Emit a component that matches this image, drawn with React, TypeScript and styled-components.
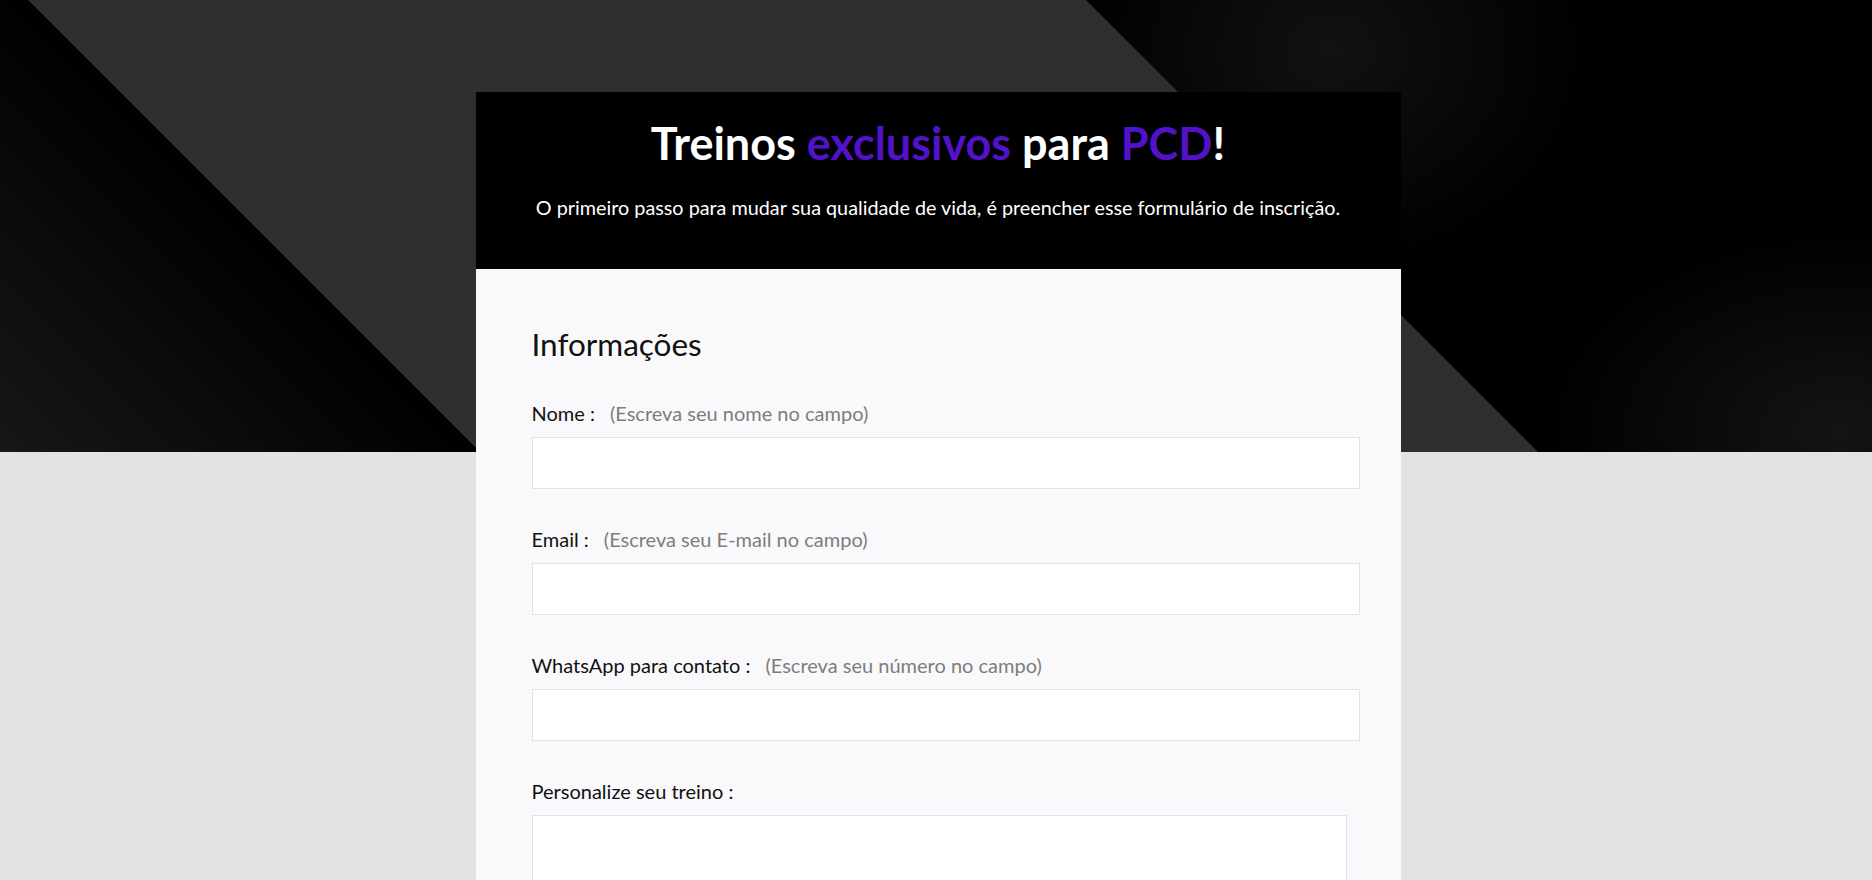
import React from 'react'
import styled, { createGlobalStyle } from 'styled-components'

const GlobalStyle = createGlobalStyle`
  html, body {
    margin: 0;
    padding: 0;
  }

  body {
    font-family: Lato, 'Open Sans', sans-serif;
    background: #e3e3e3;
  }
`

const Page = styled.div`
  min-height: 880px;
  display: grid;
  justify-content: center;
  align-content: start;
  padding-left: 4px;
  background:
    linear-gradient(
        45deg,
        #171717 0px,
        #000 339px,
        #2f2f2f 340px,
        #2f2f2f 1087px,
        transparent 1088px
      )
      top left / 100% 452px no-repeat,
    radial-gradient(ellipse 260px 220px at 1330px 50px, rgba(22, 22, 24, 0.8), transparent)
      top left / 100% 452px no-repeat,
    radial-gradient(ellipse 300px 200px at 1840px 430px, rgba(22, 22, 22, 0.9), transparent)
      top left / 100% 452px no-repeat,
    linear-gradient(#000, #000) top left / 100% 452px no-repeat,
    #e3e3e3;
`

const Card = styled.main`
  width: 925px;
  margin-top: 92px;
`

const Header = styled.header`
  background: #000;
  padding: 23px 20px 50px;
  text-align: center;
`

const Title = styled.h1`
  margin: 0;
  font-size: 45px;
  font-weight: 700;
  line-height: 56px;
  color: #fff;
`

const Accent = styled.span`
  color: #5212c9;
`

const Subtitle = styled.p`
  margin: 24px 0 0;
  font-size: 19.8px;
  line-height: 24px;
  color: #fff;
`

const Body = styled.section`
  background: #f9f9fb;
  padding: 57px 41px 0 56px;
  min-height: 620px;
`

const SectionTitle = styled.h2`
  margin: 0 0 38px;
  font-size: 31.5px;
  font-weight: 400;
  line-height: 37px;
  color: #111;
`

const Field = styled.div`
  margin-bottom: 38px;
`

const LabelRow = styled.label`
  display: flex;
  align-items: baseline;
  gap: 15px;
  height: 24px;
  margin-bottom: 12px;
  font-size: 20px;
  line-height: 24px;
  color: #111;
`

const Hint = styled.span`
  color: #7d7d7d;
`

const TextInput = styled.input`
  display: block;
  box-sizing: border-box;
  width: 100%;
  height: 52px;
  margin: 0;
  padding: 0 14px;
  border: 1px solid #e4e1ee;
  background: #fff;
  font: inherit;
  font-size: 18px;
  outline: none;
`

const TextArea = styled.textarea`
  display: block;
  box-sizing: border-box;
  width: calc(100% - 13px);
  height: 150px;
  margin: 0;
  padding: 12px 14px;
  border: 1px solid #e4e1ee;
  background: #fff;
  font: inherit;
  font-size: 18px;
  resize: none;
  outline: none;
`

type FieldProps = {
  label: string
  hint?: string
  type?: string
}

const InputField = ({ label, hint, type = 'text' }: FieldProps) => (
  <Field>
    <LabelRow>
      <span>{label}</span>
      {hint && <Hint>{hint}</Hint>}
    </LabelRow>
    <TextInput type={type} />
  </Field>
)

const App = () => (
  <>
    <GlobalStyle />
    <Page>
      <Card>
        <Header>
          <Title>
            Treinos <Accent>exclusivos</Accent> para <Accent>PCD</Accent>!
          </Title>
          <Subtitle>
            O primeiro passo para mudar sua qualidade de vida, é preencher esse formulário de inscrição.
          </Subtitle>
        </Header>
        <Body>
          <SectionTitle>Informações</SectionTitle>
          <InputField label='Nome :' hint='(Escreva seu nome no campo)' />
          <InputField label='Email :' hint='(Escreva seu E-mail no campo)' type='email' />
          <InputField label='WhatsApp para contato :' hint='(Escreva seu número no campo)' type='tel' />
          <Field>
            <LabelRow>
              <span>Personalize seu treino :</span>
            </LabelRow>
            <TextArea />
          </Field>
        </Body>
      </Card>
    </Page>
  </>
)

export default App
